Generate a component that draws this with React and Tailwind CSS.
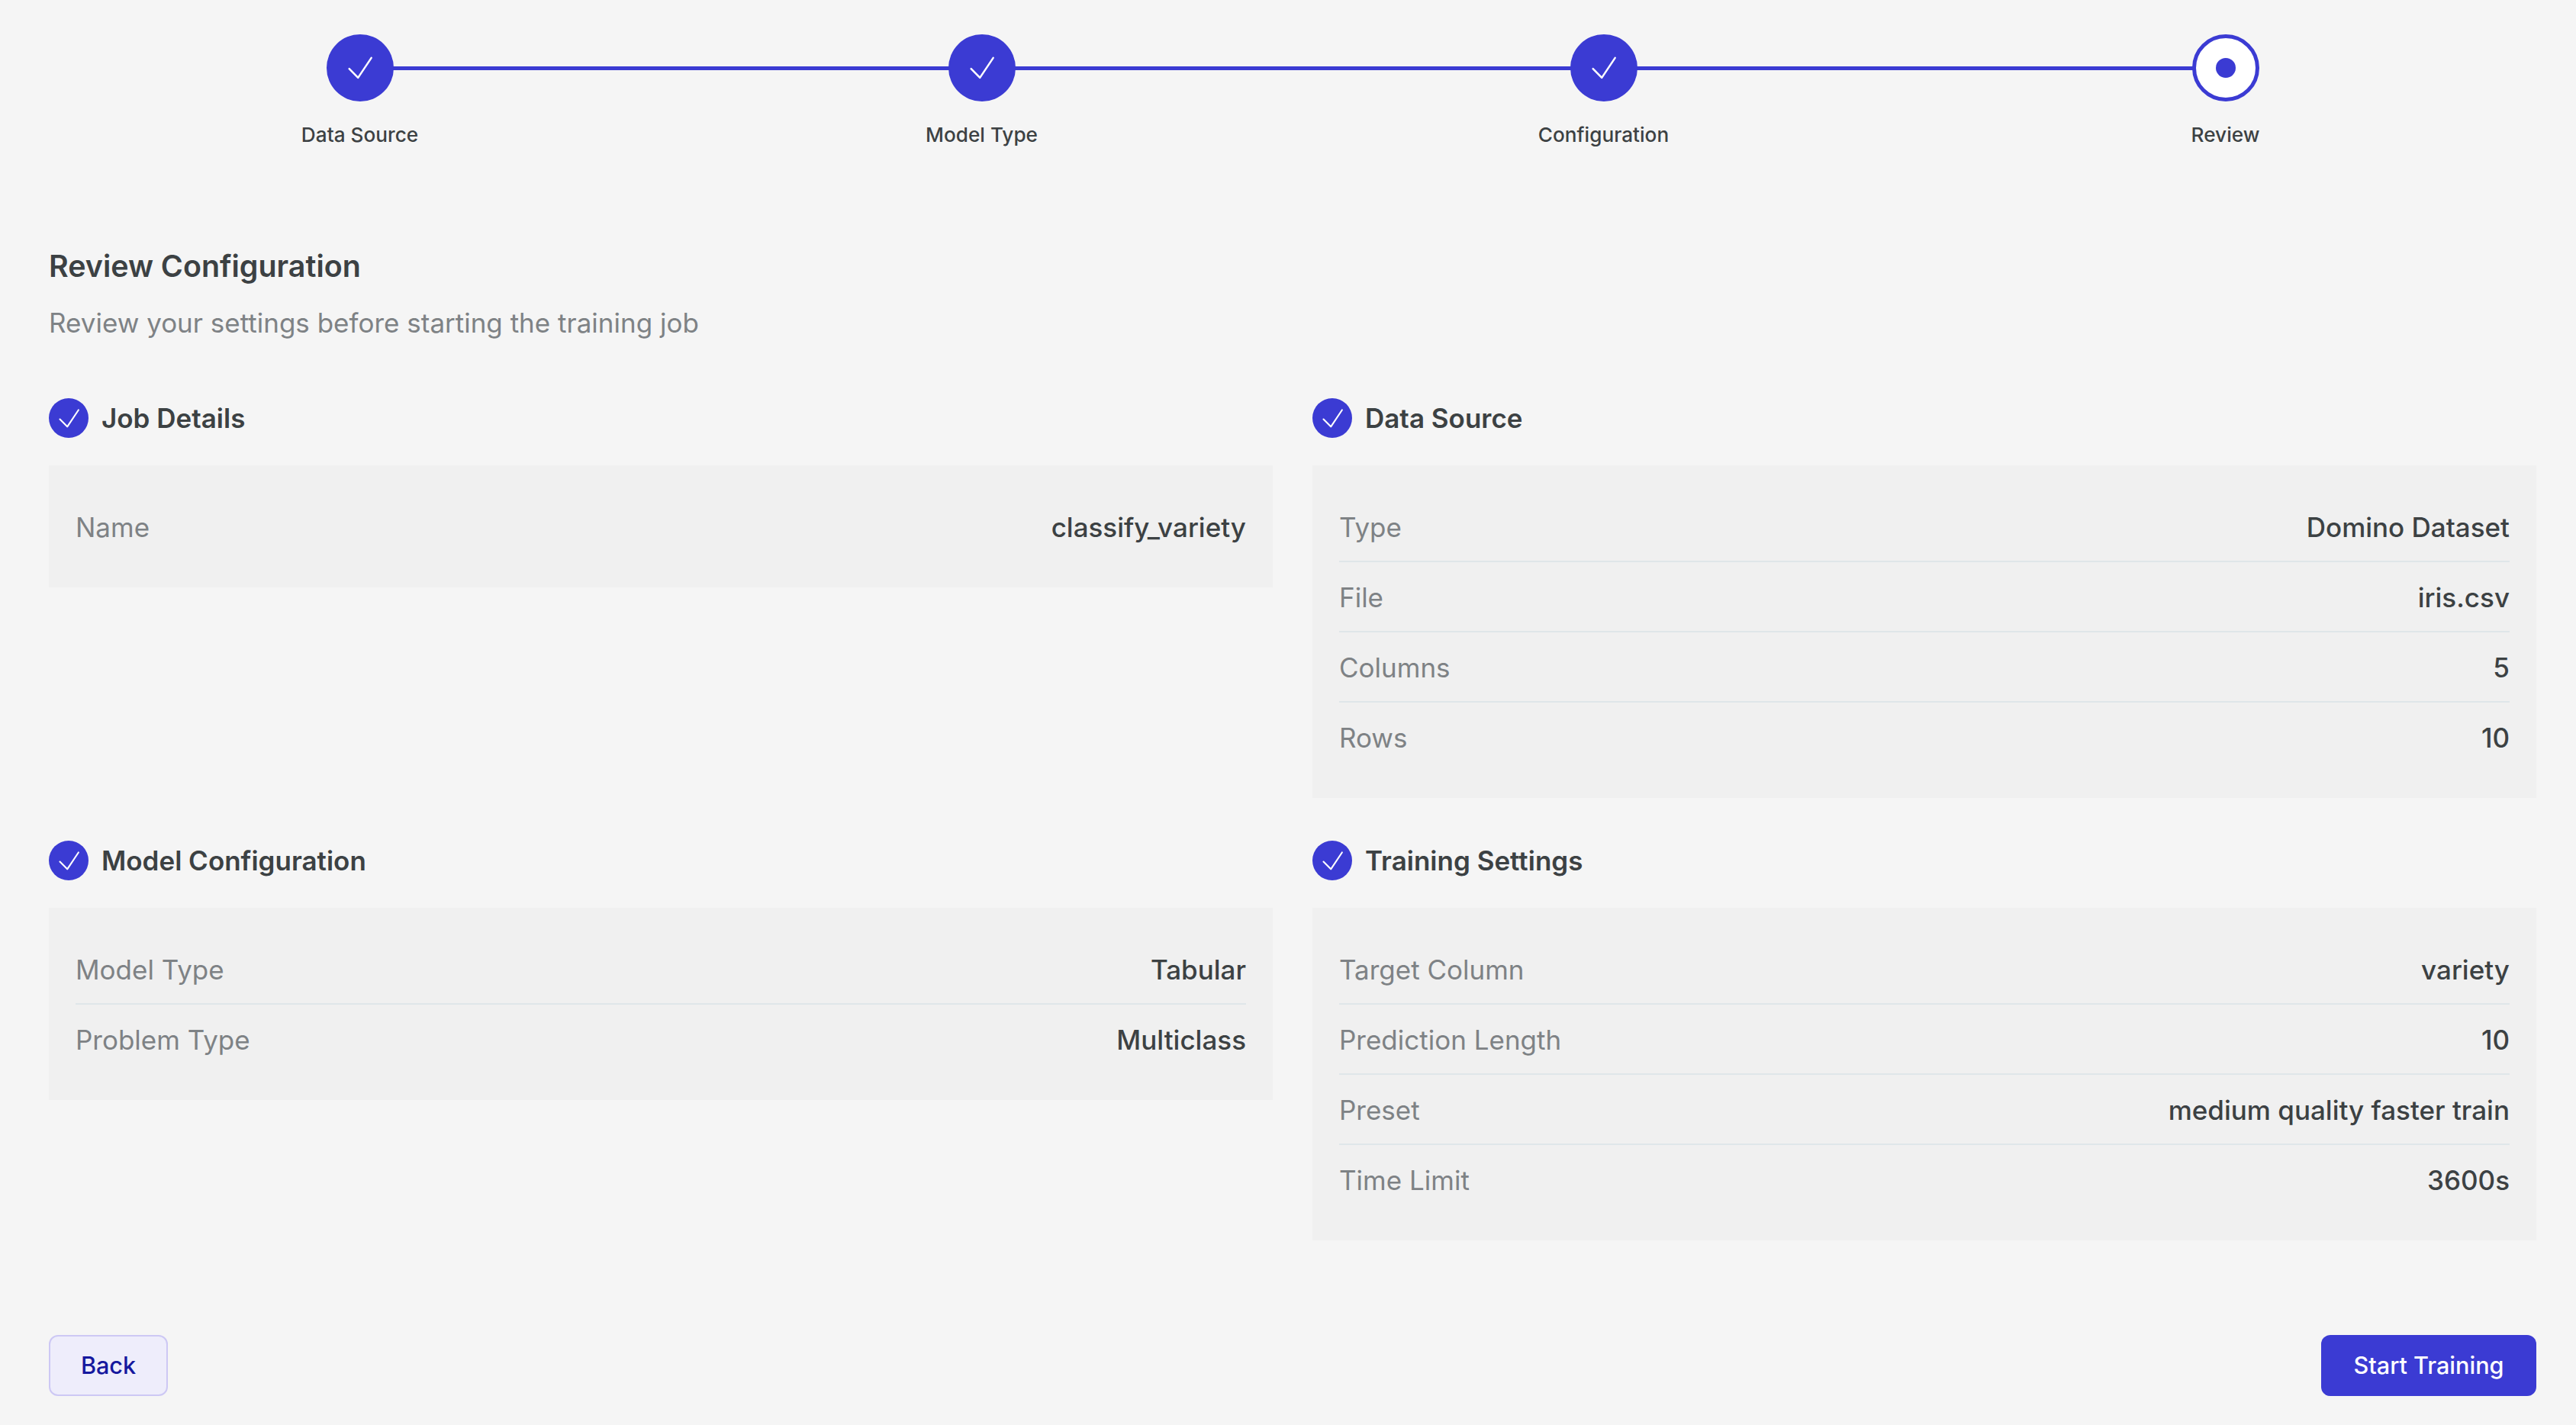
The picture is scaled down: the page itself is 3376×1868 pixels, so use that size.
import React from "react";

const Check = ({ className }) => (
  <svg viewBox="0 0 24 24" fill="none" stroke="currentColor" strokeWidth="1.36" strokeLinecap="round" strokeLinejoin="round" className={className}>
    <path d="M4.2 12.65 10.5 19 20 4.85" />
  </svg>
);

const steps = [
  { label: "Data Source", done: true },
  { label: "Model Type", done: true },
  { label: "Configuration", done: true },
  { label: "Review", done: false },
];

const Step = ({ label, done, last }) => (
  <div className="relative flex flex-col items-center">
    {!last && <div className="absolute top-[42px] left-1/2 h-[5px] w-full bg-[#3b3bd3]" />}
    {done ? (
      <div className="relative flex h-[88px] w-[88px] items-center justify-center rounded-full bg-[#3b3bd3] text-white">
        <Check className="h-[44px] w-[44px]" />
      </div>
    ) : (
      <div className="relative flex h-[88px] w-[88px] items-center justify-center rounded-full border-[5px] border-[#3b3bd3] bg-white">
        <div className="h-[26px] w-[26px] rounded-full bg-[#3b3bd3]" />
      </div>
    )}
    <div className="mt-[26px] text-[26.2px] leading-[36px] font-medium text-[#3c4143]">{label}</div>
  </div>
);

const Section = ({ title, rows }) => (
  <div>
    <div className="flex items-center gap-[17px]">
      <div className="flex h-[52px] w-[52px] items-center justify-center rounded-full bg-[#3b3bd3] text-white">
        <Check className="h-[37px] w-[37px]" />
      </div>
      <div className="text-[35px] leading-[52px] font-semibold text-[#3c4143]">{title}</div>
    </div>
    <div className="mt-[36px] bg-[#f0f0f0] px-[35px] py-[35px]">
      {rows.map(([k, v], i) => (
        <div
          key={k}
          className={`flex items-center justify-between pt-[19px] pb-[17px] text-[35px] leading-[54px] ${i < rows.length - 1 ? "border-b-2 border-[#dfe6e9]" : ""}`}
        >
          <span className="text-[#7e8285]">{k}</span>
          <span className="font-medium text-[#3c4143]">{v}</span>
        </div>
      ))}
    </div>
  </div>
);

export default function App() {
  return (
    <div className="h-[1868px] w-[3376px] bg-[#f5f5f5] pl-[64px] pr-[52px] pt-[45px] font-['Inter',sans-serif]">
      <div className="grid grid-cols-4">
        {steps.map((s, i) => (
          <Step key={s.label} {...s} last={i === steps.length - 1} />
        ))}
      </div>
      <h1 className="mt-[124px] text-[39.4px] leading-[60px] font-semibold text-[#3c4143]">Review Configuration</h1>
      <p className="mt-[17px] text-[35px] leading-[54px] text-[#7e8285]">Review your settings before starting the training job</p>
      <div className="mt-[72px] grid grid-cols-2 gap-x-[52px] gap-y-[56px]">
        <Section title="Job Details" rows={[["Name", "classify_variety"]]} />
        <Section
          title="Data Source"
          rows={[
            ["Type", "Domino Dataset"],
            ["File", "iris.csv"],
            ["Columns", "5"],
            ["Rows", "10"],
          ]}
        />
        <Section
          title="Model Configuration"
          rows={[
            ["Model Type", "Tabular"],
            ["Problem Type", "Multiclass"],
          ]}
        />
        <Section
          title="Training Settings"
          rows={[
            ["Target Column", "variety"],
            ["Prediction Length", "10"],
            ["Preset", "medium quality faster train"],
            ["Time Limit", "3600s"],
          ]}
        />
      </div>
      <div className="mt-[124px] flex items-center justify-between">
        <button className="h-[80px] w-[156px] rounded-[12px] border-2 border-[#cdc8f4] bg-[#eeedfb] text-[30.6px] font-medium text-[#15189e]">Back</button>
        <button className="h-[80px] w-[282px] rounded-[12px] bg-[#3b3bd3] text-[30.6px] font-medium text-white">Start Training</button>
      </div>
    </div>
  );
}
